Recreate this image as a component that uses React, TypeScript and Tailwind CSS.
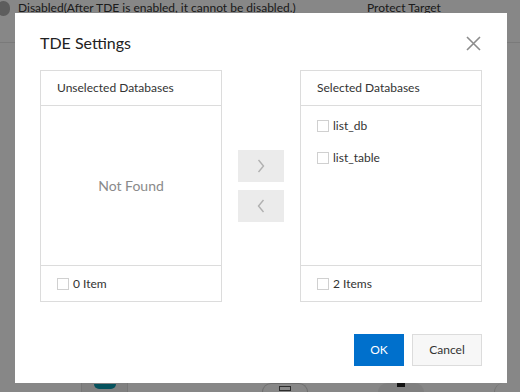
import React from 'react';

const font = { fontFamily: 'Lato, "Noto Sans", "Liberation Sans", sans-serif' };

const Checkbox = () => (
  <span className="inline-block w-[12px] h-[12px] border border-[#d0d0d0] bg-white shrink-0" />
);

const Panel = ({ title, count, children }: { title: string; count: string; children?: React.ReactNode }) => (
  <div className="flex flex-col w-[182px] h-[232px] border border-[#dcdcdc]">
    <div className="h-[35px] shrink-0 border-b border-[#dcdcdc] flex items-center px-[16px] text-[12px] text-[#333]">
      {title}
    </div>
    <div className="flex-1 min-h-0">{children}</div>
    <div className="h-[36px] shrink-0 border-t border-[#dcdcdc] flex items-center gap-[4px] px-[16px] pt-[1px] text-[12px] text-[#333]">
      <Checkbox />
      <span>{count}</span>
    </div>
  </div>
);

const Chevron = ({ dir }: { dir: 'left' | 'right' }) => (
  <svg width="8" height="14" viewBox="0 0 8 14" fill="none">
    <path
      d={dir === 'right' ? 'M1.5 1 L6.5 7 L1.5 13' : 'M6.5 1 L1.5 7 L6.5 13'}
      stroke="#b0b0b0"
      strokeWidth="1.4"
    />
  </svg>
);

export default function App() {
  return (
    <div className="relative w-[520px] h-[392px] overflow-hidden bg-white" style={font}>
      {/* page behind the modal */}
      <div className="flex items-center h-[16px] text-[12px] text-[#333]">
        <span className="w-[13px] h-[15px] -ml-[3px] rounded-full bg-[#b0b0b0]" />
        <span className="ml-[8px] w-[349px]">Disabled(After TDE is enabled, it cannot be disabled.)</span>
        <span>Protect Target</span>
      </div>
      <div className="mt-[26px] border-t border-[#e6e6e6]" />
      <div className="absolute left-0 right-0 top-[383px] h-[9px] flex">
        <div className="w-[82px] border-r border-[#e0e0e0]" />
        <div className="w-[46px] flex justify-center border-r border-[#e0e0e0] bg-[#f2f2f2]">
          <span className="mt-[1px] w-[22px] h-[5px] rounded-b-full bg-[#0a9bb0]" />
        </div>
        <div className="w-[134px]" />
        <div className="w-[46px] border-x border-t rounded-t-full border-[#cfcfcf] flex justify-center">
          <span className="mt-[2px] w-[12px] h-[5px] border border-[#555]" />
        </div>
        <div className="w-[70px]" />
        <div className="w-[46px] rounded-t-full bg-[#f0f0f0] flex justify-center">
          <span className="w-[8px] h-[4px] bg-[#222]" />
        </div>
        <div className="w-[70px]" />
        <div className="flex-1 border-l border-[#dcdcdc] rounded-tl-full" />
      </div>

      {/* overlay */}
      <div className="absolute inset-0 bg-black/[0.47]" />

      {/* dialog */}
      <div className="absolute left-[15px] top-[13px] w-[492px] h-[370px] bg-white flex flex-col px-[25px]">
        <div className="h-[57px] shrink-0 flex items-start justify-between pt-[20px]">
          <h2 className="text-[16px] leading-[20px] text-[#222]">TDE Settings</h2>
          <svg width="15" height="15" viewBox="0 0 15 15" className="mt-[3px] mr-[1px]">
            <path d="M1 1 L14 14 M14 1 L1 14" stroke="#8c8c8c" strokeWidth="1.6" />
          </svg>
        </div>

        <div className="flex items-center gap-[16px]">
          <Panel title="Unselected Databases" count="0 Item">
            <div className="h-full flex items-center justify-center text-[14px] text-[#8a8a8a]">Not Found</div>
          </Panel>
          <div className="flex flex-col gap-[8px]">
            <button className="w-[46px] h-[32px] bg-[#ebebeb] flex items-center justify-center">
              <Chevron dir="right" />
            </button>
            <button className="w-[46px] h-[32px] bg-[#ebebeb] flex items-center justify-center">
              <Chevron dir="left" />
            </button>
          </div>
          <Panel title="Selected Databases" count="2 Items">
            <div className="pt-[4px]">
              {['list_db', 'list_table'].map((name) => (
                <div key={name} className="h-[32px] flex items-center gap-[4px] px-[16px] text-[12px] text-[#333]">
                  <Checkbox />
                  <span>{name}</span>
                </div>
              ))}
            </div>
          </Panel>
        </div>

        <div className="flex justify-end gap-[8px] mt-[32px]">
          <button className="w-[50px] h-[32px] bg-[#0070cc] text-white text-[12px]">OK</button>
          <button className="w-[70px] h-[32px] bg-[#f7f7f7] border border-[#dcdcdc] text-[#333] text-[12px]">Cancel</button>
        </div>
      </div>
    </div>
  );
}
